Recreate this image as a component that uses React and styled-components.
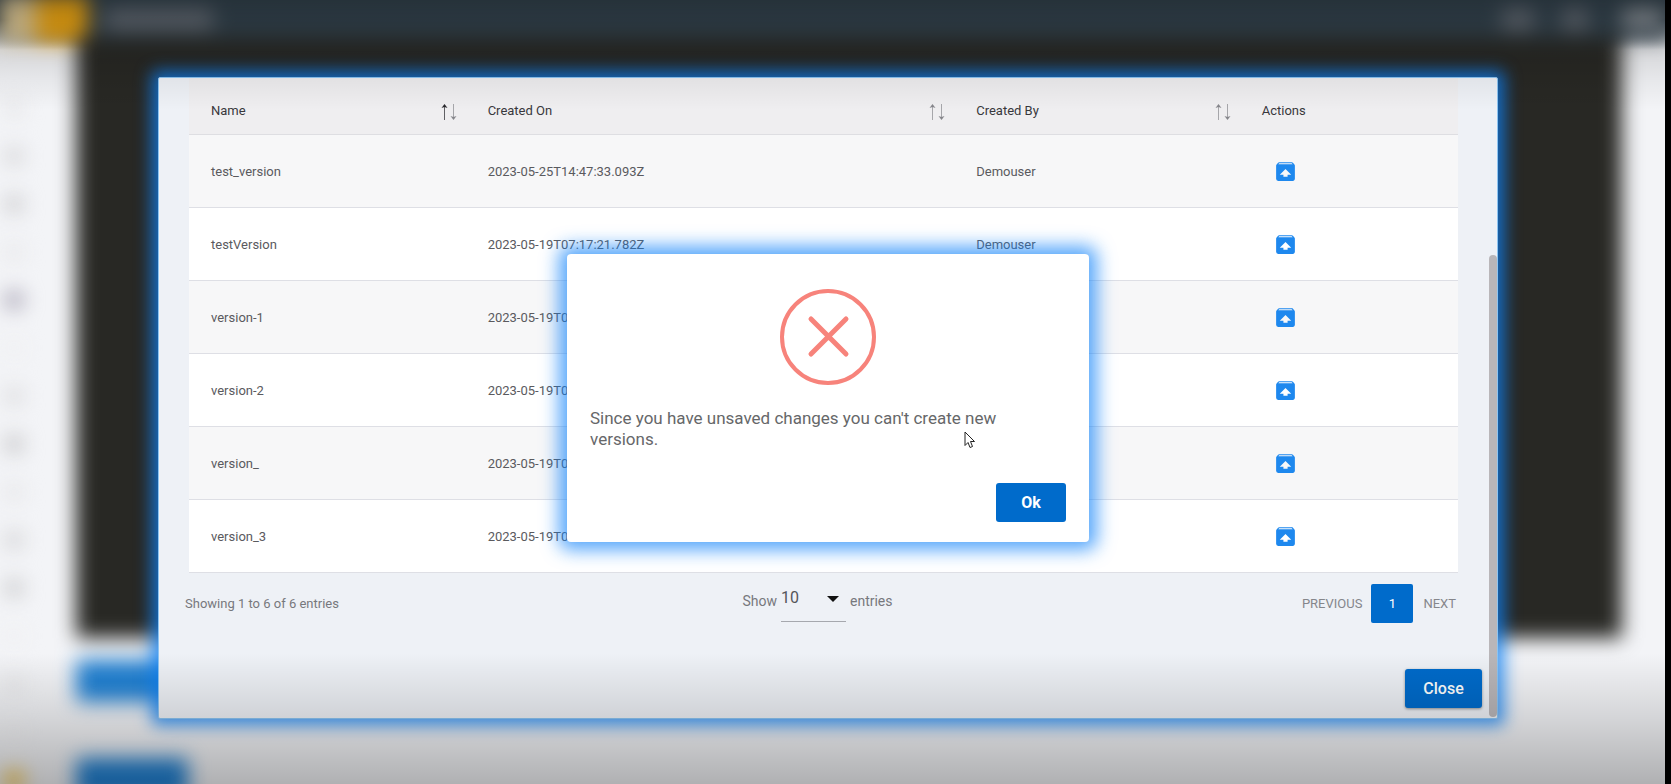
import { useState } from "react";
import styled, { createGlobalStyle } from "styled-components";
import { MdUnarchive } from "react-icons/md";

const GlobalStyle = createGlobalStyle`
  * {
    box-sizing: border-box;
  }

  body {
    margin: 0;
    background: #000000;
    color: #5a5a5e;
    font-family: Roboto, sans-serif;
    font-size: 13px;
  }

  button,
  select {
    font-family: inherit;
  }
`;

const Screen = styled.div`
  position: relative;
  min-height: 100vh;
  overflow: hidden;
`;

// Page behind the dialogs
const Backdrop = styled.div`
  position: absolute;
  inset: 0 6px 0 0;
  overflow: hidden;
  background: linear-gradient(180deg, #34444f 20px, #f3f4f7 50px);
`;

const BlurredPage = styled.div`
  display: flex;
  flex-direction: column;
  height: 100%;
  filter: blur(10px);
`;

const TopBar = styled.div`
  display: flex;
  align-items: center;
  height: 38px;
  flex-shrink: 0;
  background: #34444f;
`;

const Brand = styled.div`
  width: 88px;
  height: 48px;
  border-radius: 0 0 16px 0;
  background: linear-gradient(90deg, #e6cf9a 0 30px, #f5ac14 42px);
`;

const BarItem = styled.div`
  width: ${(p) => p.$width}px;
  height: 22px;
  margin-left: ${(p) => p.$gap || "16px"};
  border-radius: 8px;
  background: ${(p) => p.$color || "#666d76"};
`;

const PageBody = styled.div`
  display: flex;
  flex: 1;
`;

const Sidebar = styled.div`
  display: flex;
  flex-direction: column;
  align-items: flex-start;
  gap: 28px;
  width: 76px;
  padding: 60px 0 0 4px;
`;

const SideItem = styled.div`
  flex-shrink: 0;
  width: 20px;
  height: 20px;
  border-radius: 50%;
  background: ${(p) => p.$color};
`;

const Workspace = styled.div`
  flex: 1;
  margin-right: 43px;
`;

const Editor = styled.div`
  height: 600px;
  background: #282824;
`;

const PageButton = styled.div`
  width: 112px;
  height: 42px;
  margin: ${(p) => p.$top}px 0 0;
  border-radius: 4px;
  background: #2080d2;
`;

const Shade = styled.div`
  position: absolute;
  inset: 0;
  pointer-events: none;
  background:
    linear-gradient(180deg, rgba(0, 0, 0, 0.26), rgba(0, 0, 0, 0.12) 50px, rgba(0, 0, 0, 0.05) 80px, transparent 110px),
    linear-gradient(0deg, rgba(0, 0, 0, 0.28), rgba(0, 0, 0, 0.13) 66px, transparent 132px);
`;

const DialogLayer = styled.div`
  position: relative;
  padding: 77px 173px 66px 158px;
`;

const VersionsDialog = styled.section`
  position: relative;
  padding: 0 15px 10px 24px;
  border: 1px solid #8cc4f2;
  border-radius: 2px;
  background: #eef1f6;
  box-shadow: 0 0 16px 7px rgba(15, 130, 245, 0.75);
`;

const ScrollThumb = styled.div`
  position: absolute;
  top: 177px;
  right: 0;
  bottom: 1px;
  width: 8px;
  border-radius: 4px;
  background: #b9b6b9;
`;

const TableWrap = styled.div`
  padding: 0 24px 0 6px;
`;

const Table = styled.table`
  width: 100%;
  table-layout: fixed;
  border-collapse: separate;
  border-spacing: 0;
`;

const HeadCell = styled.th`
  width: ${(p) => p.$width};
  height: 57px;
  padding: 9px 9px 0 22px;
  border-bottom: 1px solid #dedee2;
  background: #efeef0;
  color: #38383c;
  font-weight: 400;
  text-align: left;
`;

const SortButton = styled.button`
  display: flex;
  align-items: center;
  justify-content: space-between;
  width: 100%;
  padding: 0;
  border: 0;
  background: none;
  color: inherit;
  font-size: 13px;
  cursor: pointer;
`;

const Row = styled.tr`
  background: #ffffff;

  &:nth-child(odd) {
    background: #f7f7f8;
  }
`;

const Cell = styled.td`
  height: 73px;
  padding: 0 22px;
  border-bottom: 1px solid #dedfe5;
`;

const IconButton = styled.button`
  display: block;
  margin-left: 11px;
  padding: 0;
  border: 0;
  background: none;
  color: #1e88ee;
  line-height: 0;
  cursor: pointer;
`;

const TableFooter = styled.div`
  display: grid;
  grid-template-columns: 1fr auto 1fr;
  align-items: center;
  height: 60px;
  padding: 0 24px 0 2px;
  color: #77787d;
`;

const PageSize = styled.div`
  display: flex;
  align-items: center;
  gap: 4px;
  padding: 0 8px 4px 0;
  font-size: 14px;
`;

const SelectBox = styled.div`
  position: relative;
  width: 65px;
  height: 42px;
  border-bottom: 1px solid #a6a8ae;

  svg {
    position: absolute;
    top: 16px;
    right: 7px;
    pointer-events: none;
  }
`;

const Select = styled.select`
  width: 100%;
  height: 34px;
  padding: 0;
  border: 0;
  appearance: none;
  background: none;
  color: #55565a;
  font-size: 16px;
`;

const Pager = styled.nav`
  display: flex;
  align-items: center;
  justify-content: flex-end;
`;

const PageLink = styled.button`
  min-width: ${(p) => (p.$active ? "42px" : "0")};
  height: 39px;
  padding: 0 ${(p) => (p.$active ? "0" : p.$last ? "2px 0 10px" : "9px")};
  border: 0;
  border-radius: 2px;
  background: ${(p) => (p.$active ? "#006bcb" : "none")};
  color: ${(p) => (p.$active ? "#ffffff" : "#85868b")};
  font-size: 13px;
`;

const DialogActions = styled.div`
  display: flex;
  justify-content: flex-end;
  padding-top: 36px;
`;

const PrimaryButton = styled.button`
  min-width: ${(p) => p.$width}px;
  height: 39px;
  border: 0;
  border-radius: 3px;
  background: #006bcb;
  box-shadow: ${(p) => (p.$raised ? "0 1px 3px rgba(0, 0, 0, 0.4)" : "none")};
  color: #ffffff;
  font-size: 16px;
  font-weight: ${(p) => (p.$raised ? 500 : 700)};
  cursor: pointer;
`;

// Message that lies over the versions dialog
const AlertLayer = styled.div`
  position: absolute;
  inset: 0 173px 0 158px;
  display: flex;
  align-items: flex-start;
  justify-content: center;
  padding-top: 254px;
  pointer-events: none;
`;

const AlertBox = styled.div`
  position: relative;
  width: 522px;
  padding: 35px 23px 20px;
  border-radius: 4px;
  background: #ffffff;
  box-shadow: 0 0 18px 8px rgba(15, 130, 250, 0.7);
  pointer-events: auto;
`;

const AlertIcon = styled.svg`
  display: block;
  margin: 0 auto;
`;

const AlertText = styled.p`
  margin: 23px 0 33px;
  color: #666769;
  font-size: 17px;
  line-height: 21px;
`;

const AlertActions = styled.div`
  display: flex;
  justify-content: flex-end;
`;

const Pointer = styled.svg`
  position: absolute;
  top: 177px;
  left: 397px;
`;

const sideColors = [
  "#e6e6e8",
  "#d6d6d8",
  "#cdcdcf",
  "#e8e8ea",
  "#aaa6b6",
  "#f0f0f2",
  "#dcdcde",
  "#c6c6c8",
  "#e6e6e8",
  "#d4d4d6",
  "#cbcbcd",
  "#f0f0f2",
  "#e6e6e8",
  "#f0f0f2",
  "#f8c232",
];

const columns = [
  { key: "name", label: "Name", width: "21.8%", sorted: true },
  { key: "createdOn", label: "Created On", width: "38.5%" },
  { key: "createdBy", label: "Created By", width: "22.5%" },
];

const versions = [
  { name: "test_version", createdOn: "2023-05-25T14:47:33.093Z" },
  { name: "testVersion", createdOn: "2023-05-19T07:17:21.782Z" },
  { name: "version-1", createdOn: "2023-05-19T07:14:52.318Z" },
  { name: "version-2", createdOn: "2023-05-19T07:15:10.406Z" },
  { name: "version_", createdOn: "2023-05-19T07:15:48.127Z" },
  { name: "version_3", createdOn: "2023-05-19T07:16:33.951Z" },
];

const SortIcon = ({ sorted }) => (
  <svg width="16" height="18" viewBox="0 0 16 18" fill="none" aria-hidden="true">
    <path d="M3.5 18V3" stroke={sorted ? "#606064" : "#a6a6aa"} />
    <path d="M0.5 6L3.5 2L6.5 6L3.5 5Z" fill={sorted ? "#28282c" : "#85858a"} />
    <path d="M12.5 2V17" stroke="#a6a6aa" />
    <path d="M9.5 14L12.5 18L15.5 14L12.5 15Z" fill="#85858a" />
  </svg>
);

const App = () => {
  const [pageSize, setPageSize] = useState("10");

  return (
    <Screen>
      <GlobalStyle />

      <Backdrop aria-hidden="true">
        <BlurredPage>
          <TopBar>
            <Brand />
            <BarItem $width={110} />
            <BarItem $width={34} $gap="auto" />
            <BarItem $width={28} $gap="26px" />
            <BarItem $width={44} $gap="32px" $color="#8d949b" />
          </TopBar>
          <PageBody>
            <Sidebar>
              {sideColors.map((color, i) => (
                <SideItem key={i} $color={color} />
              ))}
            </Sidebar>
            <Workspace>
              <Editor />
              <PageButton $top={22} />
              <PageButton $top={56} />
            </Workspace>
          </PageBody>
        </BlurredPage>
      </Backdrop>

      {/* Versions dialog */}
      <DialogLayer>
        <VersionsDialog role="dialog" aria-label="Versions">
          <TableWrap>
            <Table>
              <thead>
                <tr>
                  {columns.map((col) => (
                    <HeadCell key={col.key} $width={col.width}>
                      <SortButton type="button">
                        {col.label}
                        <SortIcon sorted={col.sorted} />
                      </SortButton>
                    </HeadCell>
                  ))}
                  <HeadCell $width="17.2%">Actions</HeadCell>
                </tr>
              </thead>
              <tbody>
                {versions.map((version) => (
                  <Row key={version.name}>
                    <Cell>{version.name}</Cell>
                    <Cell>{version.createdOn}</Cell>
                    <Cell>Demouser</Cell>
                    <Cell>
                      <IconButton type="button" aria-label={`Restore ${version.name}`}>
                        <MdUnarchive size={25} />
                      </IconButton>
                    </Cell>
                  </Row>
                ))}
              </tbody>
            </Table>
          </TableWrap>

          <TableFooter>
            <span>Showing 1 to 6 of 6 entries</span>
            <PageSize>
              <label htmlFor="page-size">Show</label>
              <SelectBox>
                <Select id="page-size" value={pageSize} onChange={(e) => setPageSize(e.target.value)}>
                  <option>10</option>
                  <option>25</option>
                  <option>50</option>
                </Select>
                <svg width="12" height="6" viewBox="0 0 12 6" aria-hidden="true">
                  <path d="M0 0H12L6 6Z" fill="#111111" />
                </svg>
              </SelectBox>
              <span>entries</span>
            </PageSize>
            <Pager>
              <PageLink type="button">PREVIOUS</PageLink>
              <PageLink type="button" $active>
                1
              </PageLink>
              <PageLink type="button" $last>
                NEXT
              </PageLink>
            </Pager>
          </TableFooter>

          <DialogActions>
            <PrimaryButton type="button" $width={77} $raised>
              Close
            </PrimaryButton>
          </DialogActions>
          <ScrollThumb />
        </VersionsDialog>
      </DialogLayer>

      <Shade />

      {/* Unsaved changes message */}
      <AlertLayer>
        <AlertBox role="alertdialog" aria-describedby="alert-text">
          <AlertIcon width="96" height="96" viewBox="0 0 96 96" fill="none" stroke="#f7837b" aria-hidden="true">
            <circle cx="48" cy="48" r="46" strokeWidth="4" />
            <path d="M31 30L66 65M66 30L31 65" strokeWidth="5" strokeLinecap="round" />
          </AlertIcon>
          <AlertText id="alert-text">Since you have unsaved changes you can't create new versions.</AlertText>
          <AlertActions>
            <PrimaryButton type="button" $width={70}>
              Ok
            </PrimaryButton>
          </AlertActions>
          <Pointer width="12" height="18" viewBox="0 0 12 18" aria-hidden="true">
            <path d="M1 1V14.5L4 11.5L6 16.5L8.5 15.5L6.5 10.5H10.5Z" fill="#ffffff" stroke="#222222" />
          </Pointer>
        </AlertBox>
      </AlertLayer>
    </Screen>
  );
};

export default App;
